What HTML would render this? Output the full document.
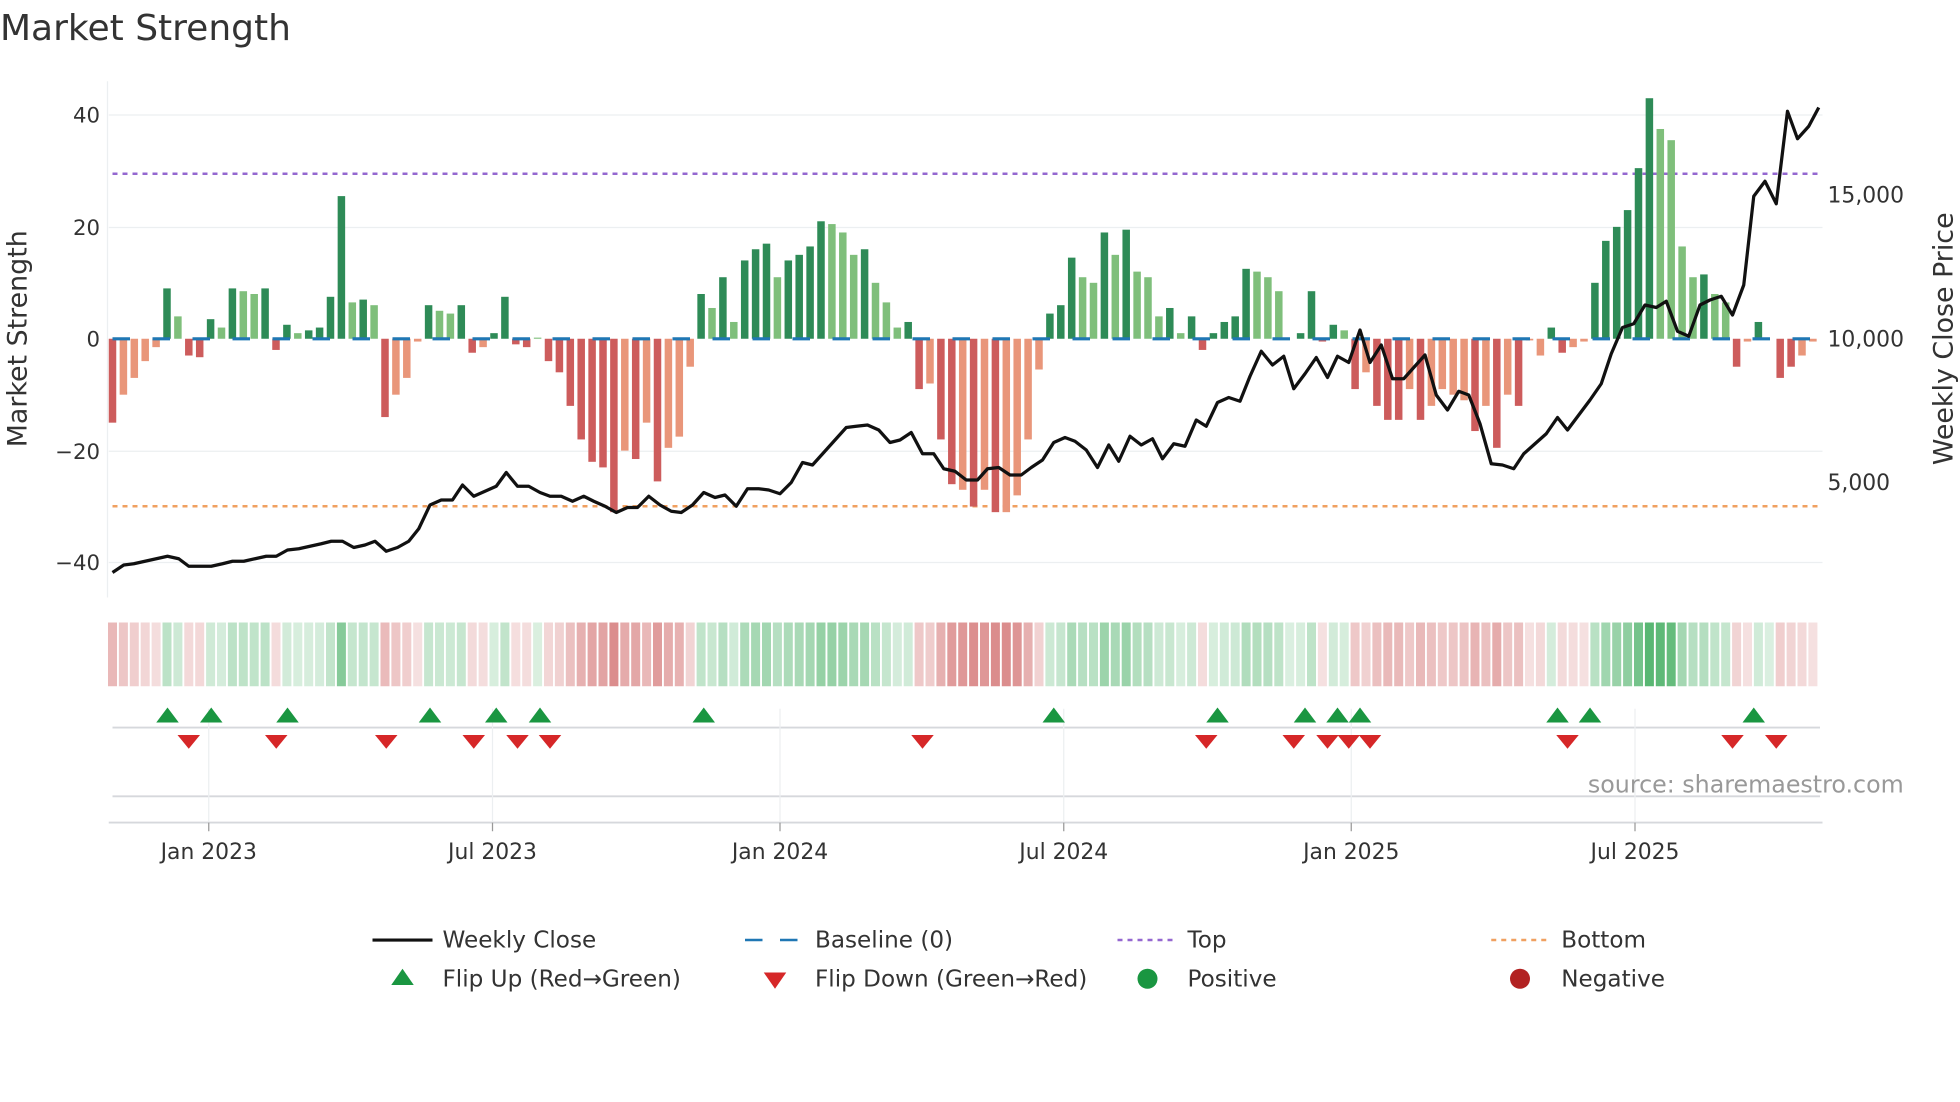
<!DOCTYPE html>
<html><head><meta charset="utf-8"><style>
html,body{margin:0;padding:0;background:#fff;}
svg{display:block;font-family:"Liberation Sans","DejaVu Sans",sans-serif;}
</style></head><body>
<svg id="s" width="1960" height="1102" viewBox="0 0 1568 881.6" xmlns="http://www.w3.org/2000/svg">
<rect width="1568" height="882" fill="#fff"/>
<text x="0" y="32" font-size="28.8" fill="#333" font-family="DejaVu Sans, sans-serif">Market Strength</text>
<g id="grid" stroke="#eceff1" stroke-width="1">
<line x1="87" x2="1458" y1="92" y2="92"/><line x1="87" x2="1458" y1="182" y2="182"/>
<line x1="87" x2="1458" y1="361" y2="361"/><line x1="87" x2="1458" y1="450" y2="450"/>
<line x1="86" x2="86" y1="65" y2="478"/>
</g>
<g font-size="17" fill="#333" text-anchor="end" font-family="DejaVu Sans, sans-serif">
<text x="80" y="98">40</text><text x="80" y="188">20</text><text x="80" y="277">0</text>
<text x="80" y="367">−20</text><text x="80" y="456">−40</text>
</g>
<g font-size="17.5" fill="#333" font-family="DejaVu Sans, sans-serif">
<text x="1462" y="162">15,000</text><text x="1462" y="277">10,000</text><text x="1462" y="392">5,000</text>
</g>
<text transform="translate(21,271) rotate(-90)" text-anchor="middle" font-size="21.5" fill="#333" font-family="DejaVu Sans, sans-serif">Market Strength</text>
<text transform="translate(1562,271) rotate(-90)" text-anchor="middle" font-size="21.5" fill="#333" font-family="DejaVu Sans, sans-serif">Weekly Close Price</text>
<line x1="90" x2="1458" y1="139" y2="139" stroke="#9467d0" stroke-width="2" stroke-dasharray="4,4"/>
<line x1="90" x2="1458" y1="405" y2="405" stroke="#f0a060" stroke-width="2" stroke-dasharray="4,4"/>
<g id="bars"></g>
<g id="strip"></g>
<g stroke="#d6d8dc" stroke-width="1.5">
<line x1="90" x2="1456" y1="582" y2="582"/><line x1="90" x2="1456" y1="637" y2="637"/><line x1="87" x2="1458" y1="658" y2="658"/>
</g>
<g id="vg" stroke="#eceff1" stroke-width="1"></g>
<g id="marks"></g>
<text x="1523" y="634" text-anchor="end" font-size="19" fill="#999" font-family="DejaVu Sans, sans-serif">source: sharemaestro.com</text>
<g font-size="17.5" fill="#333" text-anchor="middle" font-family="DejaVu Sans, sans-serif">
<text x="167" y="687">Jan 2023</text><text x="394" y="687">Jul 2023</text><text x="624" y="687">Jan 2024</text>
<text x="851" y="687">Jul 2024</text><text x="1081" y="687">Jan 2025</text><text x="1308" y="687">Jul 2025</text>
</g>
<g font-size="18.5" fill="#333" font-family="DejaVu Sans, sans-serif">
<line x1="298" x2="346" y1="752" y2="752" stroke="#111" stroke-width="2.5"/><text x="354" y="758">Weekly Close</text>
<line x1="596" x2="642" y1="752" y2="752" stroke="#1f77b4" stroke-width="2" stroke-dasharray="14,14"/><text x="652" y="758">Baseline (0)</text>
<line x1="894" x2="940" y1="752" y2="752" stroke="#9467d0" stroke-width="2" stroke-dasharray="4,4"/><text x="950" y="758">Top</text>
<line x1="1193" x2="1239" y1="752" y2="752" stroke="#f0a060" stroke-width="2" stroke-dasharray="4,4"/><text x="1249" y="758">Bottom</text>
<polygon points="313,788 331,788 322,775" fill="#1a9641"/><text x="354" y="789">Flip Up (Red→Green)</text>
<polygon points="611,778 629,778 620,791" fill="#d62728"/><text x="652" y="789">Flip Down (Green→Red)</text>
<circle cx="918" cy="783" r="8" fill="#1a9641"/><text x="950" y="789">Positive</text>
<circle cx="1216" cy="783" r="8" fill="#b22222"/><text x="1249" y="789">Negative</text>
</g>
<path id="price" fill="none" stroke="#111" stroke-width="2.6" stroke-linejoin="round"/>
</svg>
<script>
var NS="http://www.w3.org/2000/svg";
function el(t,a,p){var e=document.createElementNS(NS,t);for(var k in a)e.setAttribute(k,a[k]);document.getElementById(p).appendChild(e);return e;}
var V=[[-15,'D'],[-10,'L'],[-7,'L'],[-4,'L'],[-1.5,'L'],[9,'D'],[4,'L'],[-3,'D'],[-3.3,'D'],[3.5,'D'],[2,'L'],[9,'D'],[8.5,'L'],[8,'L'],[9,'D'],[-2,'D'],[2.5,'D'],[1,'L'],[1.5,'D'],[2,'D'],[7.5,'D'],[25.5,'D'],[6.5,'L'],[7,'D'],[6,'L'],[-14,'D'],[-10,'L'],[-7,'L'],[-0.5,'L'],[6,'D'],[5,'L'],[4.5,'L'],[6,'D'],[-2.5,'D'],[-1.5,'L'],[1,'D'],[7.5,'D'],[-1,'D'],[-1.5,'D'],[0.2,'L'],[-4,'D'],[-6,'D'],[-12,'D'],[-18,'D'],[-22,'D'],[-23,'D'],[-31,'D'],[-20,'L'],[-21.5,'D'],[-15,'L'],[-25.5,'D'],[-19.5,'L'],[-17.5,'L'],[-5,'L'],[8,'D'],[5.5,'L'],[11,'D'],[3,'L'],[14,'D'],[16,'D'],[17,'D'],[11,'L'],[14,'D'],[15,'D'],[16.5,'D'],[21,'D'],[20.5,'L'],[19,'L'],[15,'L'],[16,'D'],[10,'L'],[6.5,'L'],[2,'L'],[3,'D'],[-9,'D'],[-8,'L'],[-18,'D'],[-26,'D'],[-27,'L'],[-30,'D'],[-27,'L'],[-31,'D'],[-31,'L'],[-28,'L'],[-18,'L'],[-5.5,'L'],[4.5,'D'],[6,'D'],[14.5,'D'],[11,'L'],[10,'L'],[19,'D'],[15,'L'],[19.5,'D'],[12,'L'],[11,'L'],[4,'L'],[5.5,'D'],[1,'L'],[4,'D'],[-2,'D'],[1,'D'],[3,'D'],[4,'D'],[12.5,'D'],[12,'L'],[11,'L'],[8.5,'L'],[0,'L'],[1,'D'],[8.5,'D'],[-0.5,'D'],[2.5,'D'],[1.5,'L'],[-9,'D'],[-6,'L'],[-12,'D'],[-14.5,'D'],[-14.5,'D'],[-9,'L'],[-14.5,'D'],[-12,'L'],[-9,'L'],[-10,'L'],[-11,'L'],[-16.5,'D'],[-12,'L'],[-19.5,'D'],[-10,'L'],[-12,'D'],[-0.3,'L'],[-3,'L'],[2,'D'],[-2.5,'D'],[-1.5,'L'],[-0.5,'L'],[10,'D'],[17.5,'D'],[20,'D'],[23,'D'],[30.5,'D'],[43,'D'],[37.5,'L'],[35.5,'L'],[16.5,'L'],[11,'L'],[11.5,'D'],[8,'L'],[6.5,'L'],[-5,'D'],[-0.5,'L'],[3,'D'],[0,'L'],[-7,'D'],[-5,'D'],[-3,'L'],[-0.5,'L']];
var dx=8.72;
V.forEach(function(b,i){
  var x=90+dx*i,v=b[0],h=Math.abs(v)*4.475,y=v>=0?271-h:271;
  var c=v>=0?(b[1]=='D'?'#2e8b57':'#7fbf7b'):(b[1]=='D'?'#cd5c5c':'#e9967a');
  if(h>0.3)el('rect',{x:x-3,y:y,width:6,height:h,fill:c},'bars');
  var a=Math.min(1,0.22+Math.abs(v)/40*0.8);
  var sc=v>=0?'rgba(60,170,90,'+(a*0.85)+')':'rgba(205,95,95,'+(a*0.85)+')';
  el('rect',{x:x-3.6,y:498,width:7.2,height:51,fill:sc},'strip');
});
el('line',{x1:90,x2:1456,y1:271,y2:271,stroke:'#1f77b4','stroke-width':2.5,'stroke-dasharray':'14,18'},'bars');
[167,394,624,851,1081,1308].forEach(function(x){
  el('line',{x1:x,x2:x,y1:567,y2:658},'vg');
  el('line',{x1:x,x2:x,y1:658,y2:665,stroke:'#999'},'vg');
});
[134,169,230,344,397,432,563,843,974,1044,1070,1088,1246,1272,1403].forEach(function(x){
  el('polygon',{points:(x-9)+',578 '+(x+9)+',578 '+x+',566',fill:'#1a9641'},'marks');});
[151,221,309,379,414,440,738,965,1035,1062,1079,1096,1254,1386,1421].forEach(function(x){
  el('polygon',{points:(x-9)+',588 '+(x+9)+',588 '+x+',599',fill:'#d62728'},'marks');});
var P=[90,458,99,452,107,451,116,449,125,447,134,445,143,447,151,453,160,453,169,453,178,451,186,449,195,449,204,447,213,445,221,445,230,440,239,439,248,437,257,435,265,433,274,433,283,438,292,436,300,433,309,441,318,438,327,433,335,423,344,404,353,400,362,400,370,388,379,397,388,393,397,389,405,378,414,389,423,389,432,394,440,397,449,397,458,401,467,397,475,401,484,405,493,410,502,406,510,406,519,397,528,404,537,409,545,410,554,404,563,394,572,398,580,396,589,405,598,391,607,391,615,392,624,395,633,386,642,370,650,372,659,362,668,352,677,342,685,341,694,340,703,344,712,354,720,352,729,346,738,363,747,363,755,375,764,377,773,384,782,384,790,375,799,374,808,380,817,380,825,374,834,368,843,354,852,350,860,353,869,360,878,374,887,356,895,369,904,349,913,356,922,351,930,367,939,355,948,357,957,336,965,341,974,322,983,318,992,321,1000,301,1009,281,1018,292,1027,285,1035,311,1044,299,1053,286,1062,302,1070,285,1079,290,1088,264,1096,290,1105,276,1114,303,1123,303,1131,294,1140,284,1149,316,1158,328,1167,313,1175,316,1184,339,1193,371,1202,372,1211,375,1219,363,1228,355,1237,347,1246,334,1254,344,1263,332,1272,320,1281,307,1289,283,1298,262,1307,259,1316,244,1325,246,1333,241,1342,265,1351,269,1360,244,1368,240,1377,237,1386,252,1395,228,1403,157,1412,145,1421,163,1430,89,1438,111,1447,101,1455,86];
var d='M'+P[0]+','+P[1];for(var i=2;i<P.length;i+=2)d+=' L'+P[i]+','+P[i+1];
document.getElementById('price').setAttribute('d',d);
</script>
</body></html>
